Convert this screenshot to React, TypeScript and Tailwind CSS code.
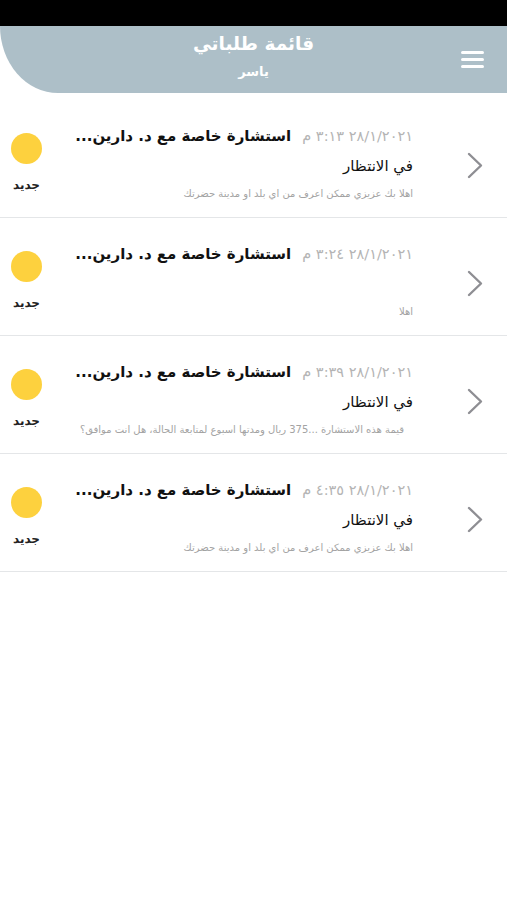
const requests = [
  {
    date: "٢٨/١/٢٠٢١ ٣:١٣ م",
    status: "في الانتظار",
    preview: "اهلا بك عزيزي ممكن اعرف من اي بلد او مدينة حضرتك",
  },
  { date: "٢٨/١/٢٠٢١ ٣:٢٤ م", status: "", preview: "اهلا" },
  {
    date: "٢٨/١/٢٠٢١ ٣:٣٩ م",
    status: "في الانتظار",
    preview: "قيمة هذه الاستشارة ...375 ريال ومدتها اسبوع لمتابعة الحالة، هل انت موافق؟",
  },
  {
    date: "٢٨/١/٢٠٢١ ٤:٣٥ م",
    status: "في الانتظار",
    preview: "اهلا بك عزيزي ممكن اعرف من اي بلد او مدينة حضرتك",
  },
];

const Chevron = () => (
  <svg width="16" height="27" viewBox="0 0 16 27" fill="none">
    <polyline points="2,2 14,13.5 2,25" stroke="#8e8e93" strokeWidth="2.4" strokeLinecap="round" strokeLinejoin="round" />
  </svg>
);

const App = () => {
  return (
    <div dir="rtl" className="min-h-[900px] w-[507px] bg-white font-['DejaVu_Sans',sans-serif]">
      <div className="h-[26px] bg-black" />
      <header className="flex h-[67px] items-center rounded-bl-[58px_67px] bg-[#adbfc8] pr-[23px]">
        <div className="flex w-[23px] flex-col gap-[4.5px]">
          <span className="h-[2.5px] rounded bg-white" />
          <span className="h-[2.5px] rounded bg-white" />
          <span className="h-[2.5px] rounded bg-white" />
        </div>
        <div className="-mr-[23px] flex flex-1 flex-col items-center self-start pt-[6px] pl-[23px] text-white">
          <h1 className="text-[18.5px] font-bold leading-[24px]">قائمة طلباتي</h1>
          <p className="mt-[8px] text-[13px] font-bold leading-[16px]">ياسر</p>
        </div>
      </header>

      <ul className="mt-[7px]">
        {requests.map((r, i) => (
          <li key={i} className="flex h-[118px] items-center border-b border-[#e4e6e8] pr-[24px] pl-[11px]">
            <div className="mt-[13px]">
              <Chevron />
            </div>
            <div className="mr-[54px] flex flex-1 flex-col self-start pt-[25px]">
              <div className="flex items-baseline gap-[11px] whitespace-nowrap">
                <span className="text-[14.5px] text-[#b4b4b4]">{r.date}</span>
                <span className="text-[15px] font-bold text-[#111]">استشارة خاصة مع د. دارين...</span>
              </div>
              <div className="mt-[7px] h-[22px] text-[15px] text-[#111]">{r.status}</div>
              <div className={`mt-[9px] text-[10px] text-[#a3a3a3] whitespace-nowrap ${i === 2 ? "pr-[9px]" : ""}`}>
                {r.preview}
              </div>
            </div>
            <div className="flex w-[31px] flex-col items-center self-start pt-[33px]">
              <span className="h-[31px] w-[31px] rounded-full bg-[#fdd13e]" />
              <span className="mt-[12px] text-[12px] font-bold text-[#222]">جديد</span>
            </div>
          </li>
        ))}
      </ul>
    </div>
  );
};

export default App;
